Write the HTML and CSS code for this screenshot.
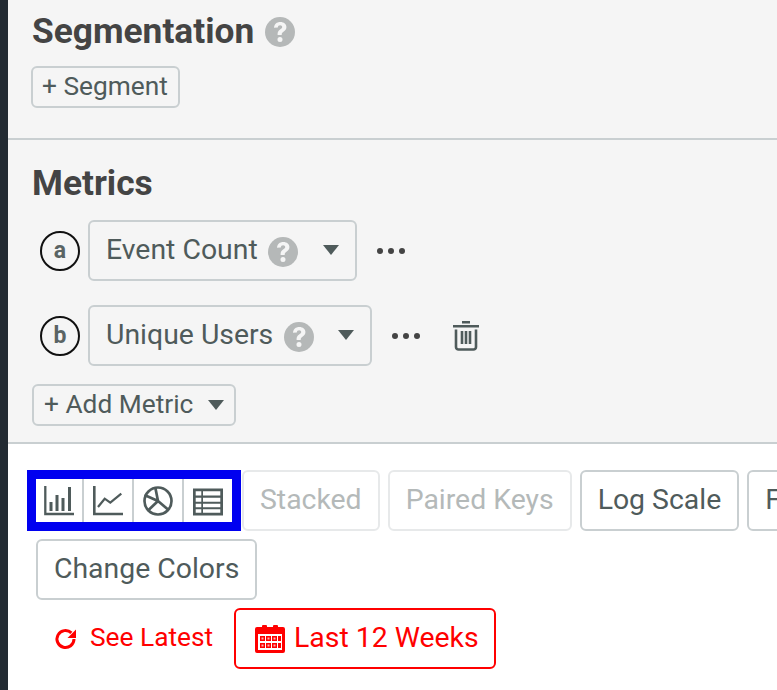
FILE: index.html
```html
<!DOCTYPE html>
<html lang="en">
<head>
<meta charset="utf-8">
<title>Segmentation and Metrics</title>
<link rel="stylesheet" href="styles.css">
</head>
<body>
<div class="rail"></div>
<main class="main">
  <section class="panel panel-seg">
    <h2 class="heading">Segmentation <svg class="help help-lg" viewBox="0 0 30 30"><use href="#q"/></svg></h2>
    <button class="btn btn-small seg-btn">+ Segment</button>
  </section>
  <section class="panel panel-metrics">
    <h2 class="heading">Metrics</h2>
    <div class="metric metric-a">
      <span class="badge">a</span>
      <div class="select select-a">Event Count <svg class="help" viewBox="0 0 30 30"><use href="#q"/></svg><span class="caret"></span></div>
      <span class="dots"><i></i><i></i><i></i></span>
    </div>
    <div class="metric metric-b">
      <span class="badge">b</span>
      <div class="select select-b">Unique Users <svg class="help" viewBox="0 0 30 30"><use href="#q"/></svg><span class="caret"></span></div>
      <span class="dots"><i></i><i></i><i></i></span>
      <svg class="trash" viewBox="0 0 28 30"><path d="M10 1.300h8M1 5.300h26" stroke="#4f5b5b" stroke-width="2.600" fill="none"/><path d="M4 8.500v17.500a2.500 2.500 0 0 0 2.500 2.500h15A2.500 2.500 0 0 0 24 26V8.500M10 10v13M14 10v13M18 10v13" stroke="#4f5b5b" stroke-width="2.600" fill="none"/></svg>
    </div>
    <button class="btn btn-small add-btn">+ Add Metric <span class="caret caret-sm"></span></button>
  </section>
  <section class="controls">
    <div class="row row-one">
      <div class="group">
        <span class="gitem"><svg viewBox="0 0 30 30" class="gicon"><path d="M1.300 0v28h28.700" fill="none" stroke="#4f5b5b" stroke-width="2.300"/><path d="M7 16v9M13 9v16M19 12v13M25.500 1v24" fill="none" stroke="#4f5b5b" stroke-width="3"/></svg></span>
        <span class="gitem"><svg viewBox="0 0 30 30" class="gicon"><path d="M1.300 0v28h28.700" fill="none" stroke="#4f5b5b" stroke-width="2.600"/><path d="M5 21l6.700-8.300 5.600 4 11-9" fill="none" stroke="#4f5b5b" stroke-width="2.200"/></svg></span>
        <span class="gitem"><svg viewBox="0 0 30 30" class="gicon"><circle cx="15" cy="15" r="13.500" fill="none" stroke="#4f5b5b" stroke-width="2.700"/><path d="M15 15L12.300 1.500M15 15L1.500 9M15 15L25 23.500M15 15L4.500 25" fill="none" stroke="#4f5b5b" stroke-width="2.700"/></svg></span>
        <span class="gitem"><svg viewBox="0 0 30 30" class="gicon"><path fill-rule="evenodd" fill="#4f5b5b" d="M0 2.500h30v27H0zM2.700 5.200v4.300h5.600V5.200zM10 5.200v4.300h17.300V5.200zM2.700 11.800v4h5.600v-4zM10 11.800v4h17.300v-4zM2.700 17.800v3.400h5.600v-3.400zM10 17.800v3.400h17.300v-3.400zM2.700 23.200v3.600h5.600v-3.600zM10 23.200v3.600h17.300v-3.600z"/></svg></span>
      </div>
      <button class="btn btn-off">Stacked</button>
      <button class="btn btn-off">Paired Keys</button>
      <button class="btn">Log Scale</button>
      <button class="btn">F</button>
    </div>
    <div class="row row-two">
      <button class="btn">Change Colors</button>
    </div>
    <div class="row row-three">
      <span class="latest">
        <svg class="redo" viewBox="0 0 24 24"><path d="M20 12a8.500 8.500 0 1 1-2.600-6.100" fill="none" stroke="#f00" stroke-width="3"/><path d="M22 2.500v8.500H13.500z" fill="#f00"/></svg>
        See Latest
      </span>
      <button class="btn btn-red">
        <svg class="cal" viewBox="0 0 30 28"><path fill="#f00" fill-rule="evenodd" d="M0 4a2 2 0 0 1 2-2h5v-1a1 1 0 0 1 1-1h3a1 1 0 0 1 1 1v1h6v-1a1 1 0 0 1 1-1h3a1 1 0 0 1 1 1v1h5a2 2 0 0 1 2 2v22a2 2 0 0 1-2 2H2a2 2 0 0 1-2-2zM3 9v16h24V9z"/><path fill="#f00" d="M5 11h5v5H5zM11 11h5v5h-5zM17 11h5v5h-5zM23 11h3v5h-3zM5 18h5v5H5zM11 18h5v5h-5zM17 18h5v5h-5zM23 18h3v5h-3z"/><path fill="#ffb3b3" d="M6.500 12.500h2v2h-2zM12.500 12.500h2v2h-2zM18.500 12.500h2v2h-2zM6.500 19.500h2v2h-2zM12.500 19.500h2v2h-2zM18.500 19.500h2v2h-2z"/></svg>
        Last 12 Weeks
      </button>
    </div>
  </section>
</main>
<svg class="defs" aria-hidden="true"><defs><g id="q"><circle cx="15" cy="15" r="15" fill="currentColor"/><path transform="translate(15 15) scale(1.15) translate(-15 -15.300)" d="M9.800 11.500C10 8.300 12.200 6.500 15.300 6.500c3.200 0 5.300 1.900 5.300 4.500 0 2-1 3-2.600 4-1.200.8-1.500 1.300-1.500 2.800h-3.600c-.1-2.400.5-3.600 2.200-4.700 1.300-.8 1.800-1.300 1.800-2.100 0-1-.7-1.600-1.800-1.600s-1.900.7-2 2zM15 19.700a2.200 2.200 0 1 1 0 4.400 2.200 2.200 0 0 1 0-4.400z" fill="#f5f5f5"/></g></defs></svg>
</body>
</html>
```
FILE: styles.css
```css
* { box-sizing: border-box; }
html, body { margin: 0; height: 690px; overflow: hidden; }
body { display: flex; background: #fff; font-family: Roboto, "Liberation Sans", sans-serif; color: #4f5b5b; }
.rail { width: 8px; flex: none; background: #232b33; }
.main { flex: 1; min-width: 0; overflow: hidden; }
.panel { background: #f5f5f5; border-bottom: 2px solid #c9cfd1; padding-left: 24px; }
.panel-seg { height: 140px; padding-top: 11px; }
.panel-metrics { height: 304px; padding-top: 23px; }
.heading { margin: 0; font-size: 35.300px; line-height: 40px; font-weight: 700; color: #444; display: flex; align-items: center; gap: 11px; }
.help { width: 30px; height: 30px; color: #b5b8b8; flex: none; }
.help-lg { margin-top: 2px; }
.btn { font: 400 28.400px/1 Roboto, sans-serif; color: #4f5b5b; background: transparent; border: 2px solid #c9cfd1; border-radius: 6px; height: 61px; padding: 0 16px; white-space: nowrap; flex: none; }
.btn-small { font-size: 26.300px; height: 42px; display: flex; align-items: center; }
.seg-btn { margin: 15px 0 0 -1px; padding: 0 10px 2px 9px; }
.metric { display: flex; align-items: center; }
.metric-a { margin: 17px 0 0 8px; }
.metric-b { margin: 24px 0 0 8px; }
.badge { width: 40px; height: 40px; border: 2px solid #111; border-radius: 50%; display: flex; align-items: center; justify-content: center; font-size: 23px; font-weight: 700; color: #5a6464; flex: none; margin-right: 8px; }
.select { height: 61px; border: 2px solid #c9cfd1; border-radius: 6px; display: flex; align-items: center; font-size: 28.400px; padding: 0 0 2px 16px; white-space: pre; flex: none; }
.select-a { width: 269px; }
.select-b { width: 284px; }
.select .help { margin: 4px 0 0 3px; }
.select-b .help { margin-left: 4px; }
.caret { width: 0; height: 0; border-left: 8px solid transparent; border-right: 8px solid transparent; border-top: 10px solid #4f5b5b; margin-left: 25px; }
.select-b .caret { margin-left: 24px; }
.caret-sm { margin: 2px 0 0 15px; }
.dots { display: flex; gap: 5px; margin-left: 20px; }
.dots i { width: 6px; height: 6px; border-radius: 50%; background: #444; }
.trash { width: 28px; height: 30px; margin-left: 32px; }
.add-btn { margin-top: 18px; padding: 0 10px 2px; }
.controls { padding: 26px 0 0 19px; }
.row { display: flex; }
.row-one { gap: 8px; align-items: stretch; }
.group { width: 214px; height: 61px; margin-right: -7px; border: 9px solid #0000f0; display: flex; align-items: stretch; flex: none; background: #fff; }
.gitem { flex: 0 0 50px; display: flex; align-items: center; justify-content: center; border-left: 2px solid #c9cfd1; }
.gitem:first-child { flex-basis: 46px; border-left: 0; }
.gicon { width: 30px; height: 30px; }
.btn-off { color: #b4b9b9; border-color: #e7e9ea; }
.row-two { margin: 8px 0 0 9px; }
.row-three { margin: 8px 0 0 9px; align-items: center; }
.latest { display: flex; align-items: center; color: #f00; font-size: 26.300px; gap: 12px; margin-left: 18px; width: 180px; padding-bottom: 4px; flex: none; }
.redo { width: 24px; height: 24px; flex: none; margin-top: 4px; }
.btn-red { color: #f00; border-color: #f00; display: flex; align-items: center; gap: 9px; padding: 0 15px 0 19px; }
.cal { width: 30px; height: 28px; flex: none; }
.defs { position: absolute; width: 0; height: 0; }
```
